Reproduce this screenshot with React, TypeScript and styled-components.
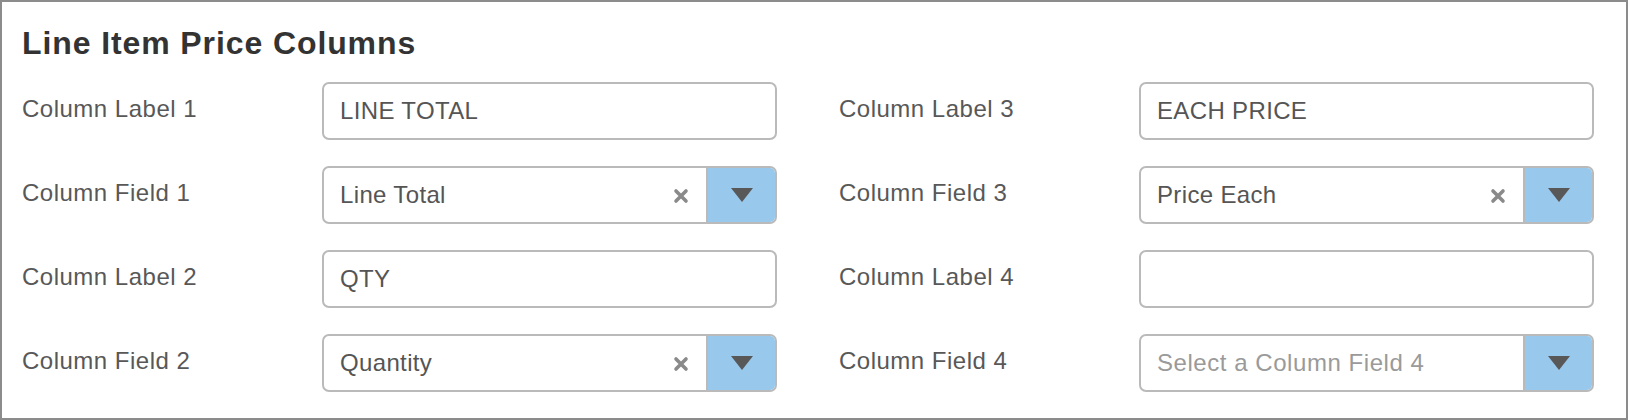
import React from "react";
import styled, { createGlobalStyle } from "styled-components";

const GlobalStyle = createGlobalStyle`
  html, body {
    margin: 0;
    padding: 0;
    background: #fff;
  }
  body {
    font-family: "Liberation Sans", Arial, Helvetica, sans-serif;
  }
`;

// Column definitions for the two halves
const columns = [
  [
    { kind: "text", label: "Column Label 1", value: "LINE TOTAL" },
    { kind: "select", label: "Column Field 1", value: "Line Total" },
    { kind: "text", label: "Column Label 2", value: "QTY" },
    { kind: "select", label: "Column Field 2", value: "Quantity" },
  ],
  [
    { kind: "text", label: "Column Label 3", value: "EACH PRICE" },
    { kind: "select", label: "Column Field 3", value: "Price Each" },
    { kind: "text", label: "Column Label 4", value: "" },
    { kind: "select", label: "Column Field 4", value: "", placeholder: "Select a Column Field 4" },
  ],
];

const Panel = styled.section`
  box-sizing: border-box;
  width: 1628px;
  height: 420px;
  border: 2px solid #8c8c8c;
  padding: 25px 32px 0 20px;
  background: #fff;
`;

const Title = styled.h2`
  margin: 0 0 23px;
  font-size: 32px;
  line-height: 32px;
  font-weight: 700;
  letter-spacing: 0.9px;
  color: #333;
`;

const Halves = styled.div`
  display: flex;
  gap: 62px;
`;

const Half = styled.div`
  flex: 1;
  display: flex;
  flex-direction: column;
  gap: 26px;
`;

const Row = styled.div`
  display: grid;
  grid-template-columns: 300px 1fr;
  align-items: center;
  height: 58px;
`;

const Label = styled.label`
  font-size: 24px;
  letter-spacing: 0.5px;
  color: #585858;
  margin-top: -4px;
`;

const TextInput = styled.input`
  box-sizing: border-box;
  width: 100%;
  height: 58px;
  margin: 0;
  padding: 0 16px;
  border: 2px solid #bababa;
  border-radius: 7px;
  font-family: "Liberation Sans", Arial, Helvetica, sans-serif;
  font-size: 24px;
  letter-spacing: 0.35px;
  color: #555;
  background: #fff;
  outline: none;
`;

const SelectBox = styled.div`
  box-sizing: border-box;
  display: flex;
  align-items: stretch;
  height: 58px;
  border: 2px solid #bababa;
  border-radius: 7px;
  overflow: hidden;
  background: #fff;
`;

const SelectValue = styled.span<{ $placeholder?: boolean }>`
  flex: 1;
  display: flex;
  align-items: center;
  padding-left: 16px;
  font-size: 24px;
  letter-spacing: ${(p) => (p.$placeholder ? "0.55px" : "0.35px")};
  color: ${(p) => (p.$placeholder ? "#9a9a9a" : "#555")};
`;

const Clear = styled.span`
  display: flex;
  align-items: center;
  margin-right: 17px;
  padding-top: 2px;
`;

const Toggle = styled.span`
  width: 67px;
  display: flex;
  align-items: center;
  justify-content: center;
  border-left: 2px solid #bababa;
  background: #98c8eb;
`;

const ClearIcon = () => (
  <svg width="16" height="16" viewBox="0 0 16 16">
    <path d="M3 3 L13 13 M13 3 L3 13" stroke="#8a8a8a" strokeWidth="3.6" strokeLinecap="round" />
  </svg>
);

const ArrowIcon = () => (
  <svg width="22" height="14" viewBox="0 0 22 14">
    <path d="M0 0 H22 L11 14 Z" fill="#585858" />
  </svg>
);

function Field({ field }) {
  if (field.kind === "text") {
    return <TextInput type="text" value={field.value} readOnly />;
  }
  const empty = !field.value;
  return (
    <SelectBox>
      <SelectValue $placeholder={empty}>{empty ? field.placeholder : field.value}</SelectValue>
      {!empty && (
        <Clear>
          <ClearIcon />
        </Clear>
      )}
      <Toggle>
        <ArrowIcon />
      </Toggle>
    </SelectBox>
  );
}

export default function App() {
  return (
    <>
      <GlobalStyle />
      <Panel>
        <Title>Line Item Price Columns</Title>
        <Halves>
          {columns.map((col, i) => (
            <Half key={i}>
              {col.map((field) => (
                <Row key={field.label}>
                  <Label>{field.label}</Label>
                  <Field field={field} />
                </Row>
              ))}
            </Half>
          ))}
        </Halves>
      </Panel>
    </>
  );
}
